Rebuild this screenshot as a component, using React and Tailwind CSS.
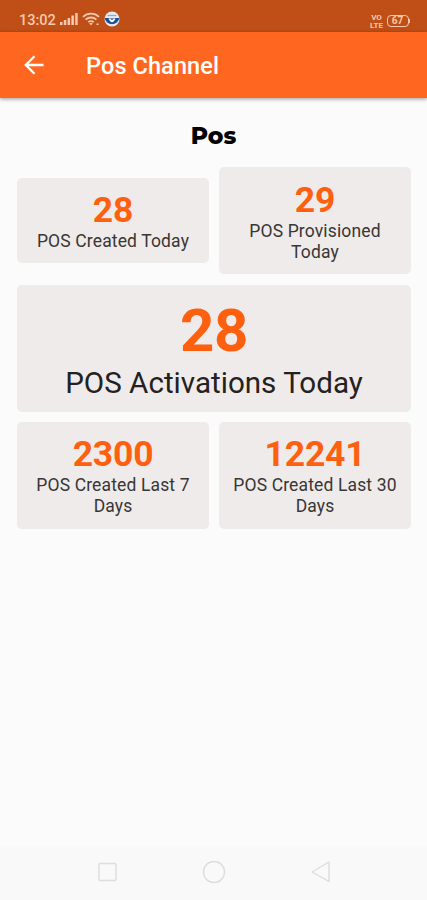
const cardBase = 'flex flex-col items-center rounded-[5px] bg-[#efebea] text-center';

function StatCard({ value, label }) {
  return (
    <div className={`${cardBase} w-48 px-3 pt-[11.5px] pb-[11px]`}>
      <div className="text-[35.5px] leading-[42px] font-bold tracking-[-0.2px] text-[#ff6010]">{value}</div>
      <div className="text-[17.5px] leading-[21.25px] font-normal tracking-[0.14px] text-[#393636]">{label}</div>
    </div>
  );
}

function StatusBar() {
  return (
    <div className="flex h-8 items-end justify-between bg-[#bf4f17] pr-[17px] pb-[3px] pl-[19px] text-[#f8c8ae]">
      <div className="flex items-center">
        <span className="w-[41px] pt-[5px] text-[14.5px] leading-[16px] font-medium">13:02</span>
        <svg width="18" height="14" viewBox="0 0 18 14" fill="currentColor">
          <rect x="0" y="10" width="2.5" height="3" />
          <rect x="3.8" y="8" width="2.5" height="5" />
          <rect x="7.6" y="6" width="2.5" height="7" />
          <rect x="11.4" y="3.5" width="2.5" height="9.5" />
          <rect x="15.2" y="1" width="2.5" height="12" />
        </svg>
        <svg className="ml-1" width="18" height="14" viewBox="0 0 18 14" fill="none" stroke="currentColor" strokeWidth="1.8">
          <path d="M1 4.8C5.5.6 12.5.6 17 4.8M3.6 7.6c3-2.8 7.8-2.8 10.8 0M6.3 10.2c1.5-1.4 3.9-1.4 5.4 0" />
          <path d="M7.2 11h3.6L9 13.5zM14.5 11.5h2v1.5h-2z" fill="currentColor" stroke="none" />
        </svg>
        <svg className="ml-1" width="16" height="16" viewBox="0 0 16 16">
          <circle cx="8" cy="8" r="7.5" fill="#e9edf2" />
          <path d="M.6 7h14.8a7.5 7.5 0 0 1-14.8 0z" fill="#1f4e94" />
          <path d="M3.5 4.5h9" stroke="#9aa9b9" strokeWidth="1.4" />
          <path d="M4.5 7.5Q8 15 11.5 7.5z" fill="#fff" />
          <path d="M6.3 7.5Q8 10.8 9.7 7.5z" fill="#3978bd" />
        </svg>
      </div>
      <div className="flex items-center gap-[3px]">
        <div className="flex w-[14px] flex-col items-center text-[8px] leading-[7.5px] font-bold">
          <span>VO</span>
          <span>LTE</span>
        </div>
        <div className="mb-px flex items-center">
          <div className="flex h-3 w-[22px] items-center justify-center rounded-[4px] border border-current text-[10px] leading-none font-bold">67</div>
          <div className="h-1 w-[1.5px] bg-current" />
        </div>
      </div>
    </div>
  );
}

export default function App() {
  return (
    <div className="flex h-[900px] w-[427px] flex-col overflow-hidden bg-[#fbfbfb] font-[Roboto,sans-serif]">
      <StatusBar />
      <header className="flex h-[66px] shrink-0 items-center bg-[#ff6720] pl-[24px] text-white shadow-[0_1px_4px_rgba(0,0,0,0.4)]">
        <svg width="20" height="20" viewBox="0 0 20 20" fill="none" stroke="currentColor" strokeWidth="2.3">
          <path d="M19.5 10H2.5M10.5 1.2 1.8 10l8.7 8.8" />
        </svg>
        <h1 className="ml-[42px] pt-[3px] text-[23.5px] leading-none font-medium tracking-[0.1px]">Pos Channel</h1>
      </header>
      <main className="flex flex-1 flex-col pr-4 pl-[17px]">
        <h2 className="mt-[24px] h-[45px] pr-px text-center font-[Montserrat,Inter,sans-serif] text-[23.5px] leading-[28px] font-extrabold text-black">Pos</h2>
        <div className="flex items-center justify-between">
          <StatCard value="28" label="POS Created Today" />
          <StatCard value="29" label="POS Provisioned Today" />
        </div>
        <div className={`${cardBase} mt-[11px] mb-[9.5px] py-[11px]`}>
          <div className="text-[60px] leading-[70px] font-bold tracking-[-0.5px] text-[#ff6010]">28</div>
          <div className="text-[29.6px] leading-[35px] font-normal text-[#242121]">POS Activations Today</div>
        </div>
        <div className="flex justify-between">
          <StatCard value="2300" label="POS Created Last 7 Days" />
          <StatCard value="12241" label="POS Created Last 30 Days" />
        </div>
      </main>
      <nav className="flex h-[53px] items-center bg-[#f9f9f9] pb-[3px] pl-[98px] text-[#dddddd]">
        <svg width="234" height="24" viewBox="0 0 234 24" fill="none" stroke="currentColor" strokeWidth="1.4">
          <rect x="1" y="3.5" width="17" height="17" rx="1" />
          <circle cx="116" cy="12" r="10.5" />
          <path d="M231 2v19.5L214 12z" strokeLinejoin="round" />
        </svg>
      </nav>
    </div>
  );
}
